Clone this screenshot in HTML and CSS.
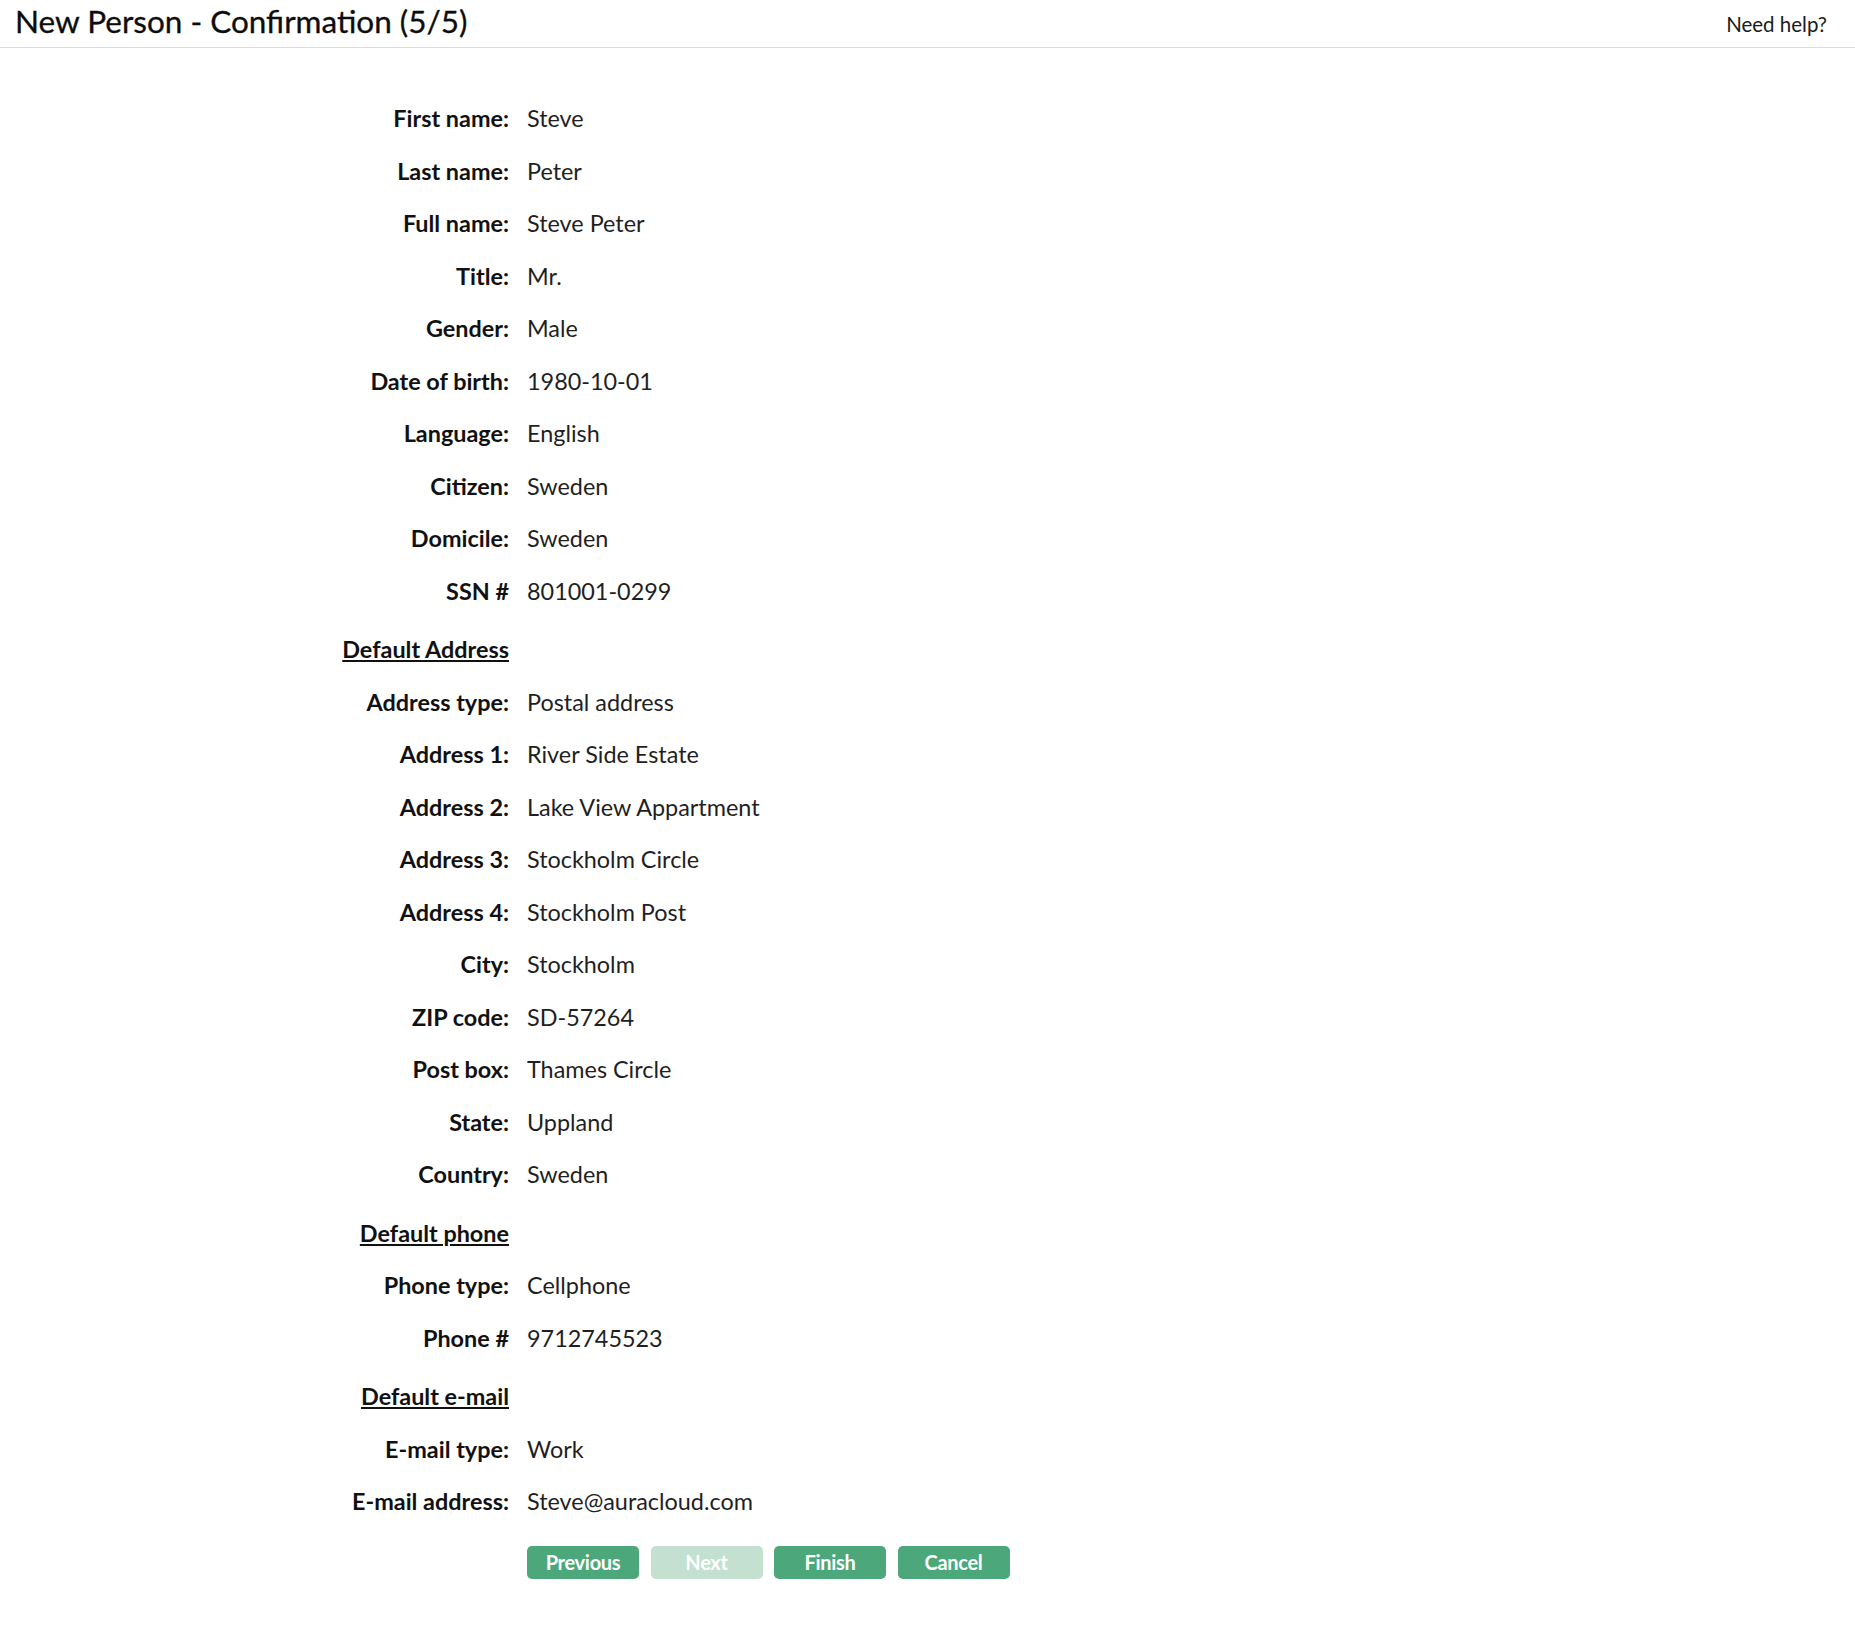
FILE: index.html
```html
<!DOCTYPE html>
<html lang="en">
<head>
<meta charset="utf-8">
<title>New Person - Confirmation (5/5)</title>
<link rel="stylesheet" href="styles.css">
</head>
<body>
<header class="topbar">
  <h1 class="page-title">New Person - Confirmation (5/5)</h1>
  <a class="help-link" href="#">Need help?</a>
</header>
<main class="summary">
  <div class="row"><div class="label">First name:</div><div class="value">Steve</div></div>
  <div class="row"><div class="label">Last name:</div><div class="value">Peter</div></div>
  <div class="row"><div class="label">Full name:</div><div class="value">Steve Peter</div></div>
  <div class="row"><div class="label">Title:</div><div class="value">Mr.</div></div>
  <div class="row"><div class="label">Gender:</div><div class="value">Male</div></div>
  <div class="row"><div class="label">Date of birth:</div><div class="value">1980-10-01</div></div>
  <div class="row"><div class="label">Language:</div><div class="value">English</div></div>
  <div class="row"><div class="label">Citizen:</div><div class="value">Sweden</div></div>
  <div class="row"><div class="label">Domicile:</div><div class="value">Sweden</div></div>
  <div class="row"><div class="label">SSN #</div><div class="value">801001-0299</div></div>

  <div class="row section"><div class="label section-title">Default Address</div></div>
  <div class="row"><div class="label">Address type:</div><div class="value">Postal address</div></div>
  <div class="row"><div class="label">Address 1:</div><div class="value">River Side Estate</div></div>
  <div class="row"><div class="label">Address 2:</div><div class="value">Lake View Appartment</div></div>
  <div class="row"><div class="label">Address 3:</div><div class="value">Stockholm Circle</div></div>
  <div class="row"><div class="label">Address 4:</div><div class="value">Stockholm Post</div></div>
  <div class="row"><div class="label">City:</div><div class="value">Stockholm</div></div>
  <div class="row"><div class="label">ZIP code:</div><div class="value">SD-57264</div></div>
  <div class="row"><div class="label">Post box:</div><div class="value">Thames Circle</div></div>
  <div class="row"><div class="label">State:</div><div class="value">Uppland</div></div>
  <div class="row"><div class="label">Country:</div><div class="value">Sweden</div></div>

  <div class="row section"><div class="label section-title">Default phone</div></div>
  <div class="row"><div class="label">Phone type:</div><div class="value">Cellphone</div></div>
  <div class="row"><div class="label">Phone #</div><div class="value">9712745523</div></div>

  <div class="row section"><div class="label section-title">Default e-mail</div></div>
  <div class="row"><div class="label">E-mail type:</div><div class="value">Work</div></div>
  <div class="row"><div class="label">E-mail address:</div><div class="value">Steve@auracloud.com</div></div>

  <div class="actions">
    <button class="btn" type="button">Previous</button>
    <button class="btn btn-disabled" type="button" disabled>Next</button>
    <button class="btn" type="button">Finish</button>
    <button class="btn" type="button">Cancel</button>
  </div>
</main>
</body>
</html>
```
FILE: styles.css
```css
html, body {
  margin: 0;
  padding: 0;
  background: #ffffff;
}
body {
  font-family: "Lato", "Open Sans", sans-serif;
  color: #1a1a1a;
}
.topbar {
  display: flex;
  justify-content: space-between;
  align-items: flex-start;
  height: 47px;
  padding: 0 28px 0 15px;
  border-bottom: 1px solid #dcdcdc;
}
.page-title {
  margin: 0;
  font-size: 31.5px;
  font-weight: 400;
  line-height: 42px;
  color: #0d0d0d;
  -webkit-text-stroke: 0.3px #0d0d0d;
}
.help-link {
  margin-top: 3px;
  font-size: 20.5px;
  line-height: 42px;
  color: #1a1a1a;
  text-decoration: none;
}
.summary {
  padding-top: 44px;
}
.row {
  display: flex;
  height: 52.5px;
  line-height: 52.5px;
  font-size: 23.4px;
}
.row.section {
  margin-top: 6px;
}
.label {
  width: 509px;
  flex: none;
  text-align: right;
  font-weight: 700;
  color: #111111;
}
.value {
  margin-left: 18px;
  color: #1f1f1f;
}
.section-title {
  text-decoration: underline;
  text-decoration-thickness: 2px;
  text-underline-offset: 2px;
}
.actions {
  display: flex;
  gap: 11.5px;
  margin-top: 18px;
  padding-left: 527px;
}
.btn {
  width: 112px;
  height: 33px;
  padding: 0;
  border: none;
  border-radius: 5px;
  background: #4ca87b;
  color: #ffffff;
  font-family: "Lato", "Open Sans", sans-serif;
  font-size: 20px;
  font-weight: 700;
  letter-spacing: -0.3px;
  cursor: pointer;
}
.btn-disabled {
  background: #c3e0d1;
  cursor: default;
}
```
